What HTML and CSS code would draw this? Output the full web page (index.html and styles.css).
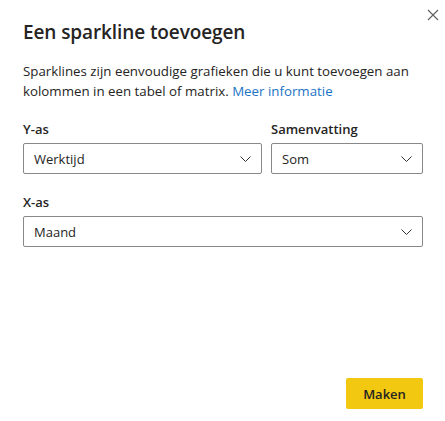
FILE: index.html
```html
<!DOCTYPE html>
<html lang="nl">
<head>
<meta charset="utf-8">
<link rel="stylesheet" href="styles.css">
</head>
<body>
<div class="dialog">
  <button class="close" aria-label="Sluiten">
    <svg width="12" height="12" viewBox="0 0 12 12"><path d="M1 1 L11 11 M11 1 L1 11" stroke="#605e5c" stroke-width="1.1" fill="none"/></svg>
  </button>
  <h1 class="title">Een sparkline toevoegen</h1>
  <p class="desc">Sparklines zijn eenvoudige grafieken die u kunt toevoegen aan kolommen in een tabel of matrix. <a href="#" class="link">Meer informatie</a></p>
  <div class="row">
    <div class="field grow">
      <div class="label">Y-as</div>
      <div class="select"><span>Werktijd</span><svg class="chev" width="11" height="6" viewBox="0 0 11 6"><path d="M0.5 0.5 L5.5 5.5 L10.5 0.5" stroke="#323130" stroke-width="1" fill="none"/></svg></div>
    </div>
    <div class="field side">
      <div class="label">Samenvatting</div>
      <div class="select"><span>Som</span><svg class="chev" width="11" height="6" viewBox="0 0 11 6"><path d="M0.5 0.5 L5.5 5.5 L10.5 0.5" stroke="#323130" stroke-width="1" fill="none"/></svg></div>
    </div>
  </div>
  <div class="field">
    <div class="label">X-as</div>
    <div class="select"><span>Maand</span><svg class="chev" width="11" height="6" viewBox="0 0 11 6"><path d="M0.5 0.5 L5.5 5.5 L10.5 0.5" stroke="#323130" stroke-width="1" fill="none"/></svg></div>
  </div>
  <div class="footer">
    <button class="primary">Maken</button>
  </div>
</div>
</body>
</html>
```
FILE: styles.css
```css
html, body {
  margin: 0;
  padding: 0;
  background: #ffffff;
}
body {
  font-family: "Open Sans", "Noto Sans", sans-serif;
  color: #252423;
}
.dialog {
  position: relative;
  width: 445px;
  height: 421px;
  box-sizing: border-box;
  padding: 18px 22px 0 23px;
  display: flex;
  flex-direction: column;
}
.close {
  position: absolute;
  top: 9px;
  left: 427px;
  width: 12px;
  height: 12px;
  padding: 0;
  border: 0;
  background: none;
  display: flex;
}
.title {
  margin: 0;
  font-size: 19px;
  font-weight: 600;
  line-height: 28px;
  letter-spacing: -0.1px;
}
.desc {
  margin: 15px 0 0;
  font-size: 13.3px;
  line-height: 20px;
}
.link {
  color: #1c73c6;
  text-decoration: none;
}
.row {
  display: flex;
  gap: 9px;
  margin-top: 18px;
}
.grow { flex: 1; }
.side { width: 152px; }
.field { display: flex; flex-direction: column; }
.row + .field { margin-top: 18px; }
.label {
  font-size: 13px;
  font-weight: 600;
  line-height: 20px;
  margin-bottom: 4px;
}
.select {
  height: 31px;
  box-sizing: border-box;
  border: 1px solid #8a8886;
  border-radius: 2px;
  display: flex;
  align-items: center;
  justify-content: space-between;
  padding: 0 10px 0 10px;
  font-size: 13px;
}
.chev { margin-top: 1px; }
.footer {
  margin-top: auto;
  margin-bottom: 12px;
  display: flex;
  justify-content: flex-end;
}
.primary {
  width: 77px;
  height: 31px;
  border: 0;
  border-radius: 2px;
  background: #f2c811;
  color: #252423;
  font-family: inherit;
  font-size: 13px;
  font-weight: 600;
}
```
